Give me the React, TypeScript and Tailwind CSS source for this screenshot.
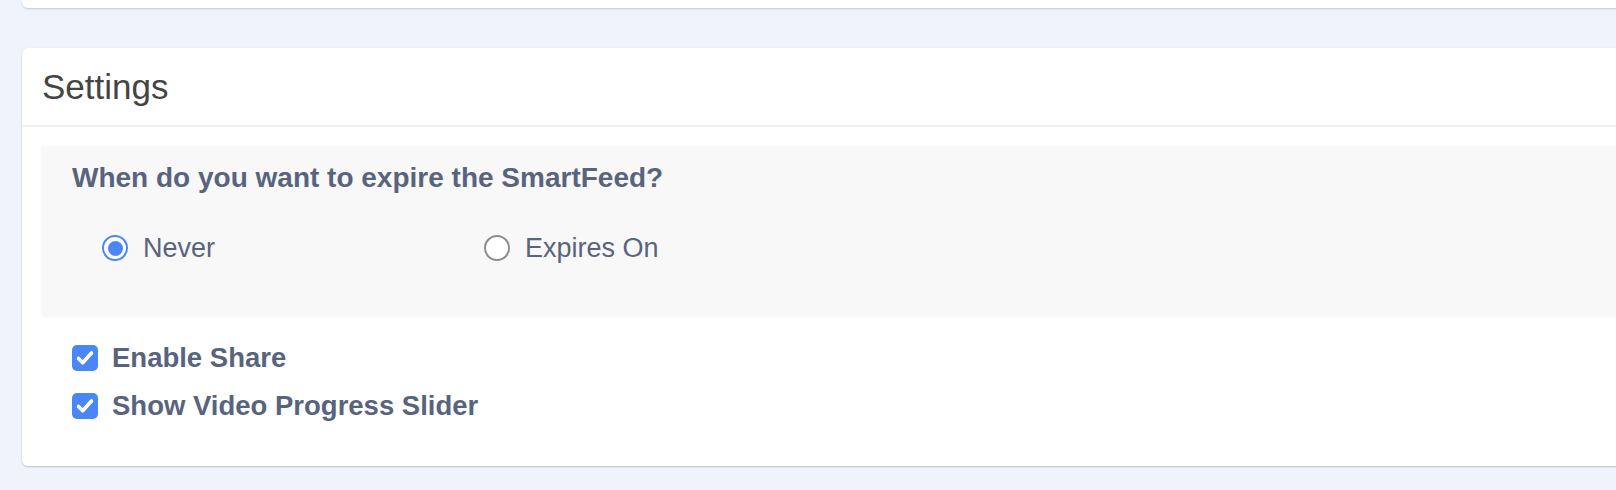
import React, { useState } from 'react'

const CheckRow: React.FC<{ label: string; checked: boolean; onToggle: () => void }> = ({ label, checked, onToggle }) => (
  <label className="flex h-[36px] items-center cursor-pointer" onClick={onToggle}>
    <span
      className={
        checked
          ? 'flex h-[26px] w-[26px] items-center justify-center rounded-[5px] bg-[#4a86f6]'
          : 'flex h-[26px] w-[26px] items-center justify-center rounded-[5px] border-2 border-[#8a8a8a] bg-white'
      }
    >
      {checked && (
        <svg width="22" height="22" viewBox="0 0 22 22" fill="none">
          <path d="M4.5 11.5l4.2 4.2L17.5 6" stroke="#fff" strokeWidth="3.6" strokeLinecap="round" strokeLinejoin="round" />
        </svg>
      )}
    </span>
    <span className="ml-[14px] text-[27.5px] font-bold text-[#58647e]">{label}</span>
  </label>
)

const Radio: React.FC<{ label: string; selected: boolean; onSelect: () => void; className?: string }> = ({
  label,
  selected,
  onSelect,
  className,
}) => (
  <label className={'flex h-[32px] items-center cursor-pointer ' + (className || '')} onClick={onSelect}>
    {selected ? (
      <span className="flex h-[26px] w-[26px] items-center justify-center rounded-full border-[2.5px] border-[#4a86f6] bg-white">
        <span className="h-[15px] w-[15px] rounded-full bg-[#4a86f6]" />
      </span>
    ) : (
      <span className="h-[26px] w-[26px] rounded-full border-2 border-[#8c8c8c] bg-white" />
    )}
    <span className="ml-[15px] text-[27px] text-[#58647e]">{label}</span>
  </label>
)

const App: React.FC = () => {
  const [expire, setExpire] = useState<'never' | 'on'>('never')
  const [share, setShare] = useState(true)
  const [slider, setSlider] = useState(true)

  return (
    <div className="h-[490px] w-full overflow-hidden bg-[#eff4fc] pl-[22px]" style={{ fontFamily: '"Liberation Sans", Arial, sans-serif' }}>
      {/* previous card, mostly scrolled out */}
      <div className="h-[8px] w-[1640px] rounded-b-md bg-white shadow-[0_1px_2px_rgba(0,0,0,0.18)]" />

      <div className="mt-[40px] w-[1640px] rounded-md bg-white shadow-[0_1px_2px_rgba(0,0,0,0.22)]">
        <div className="flex h-[79px] items-center border-b-2 border-[#f1f1f1] pl-[20px]">
          <h2 className="text-[35px] font-normal leading-none text-[#444444]">Settings</h2>
        </div>

        <div className="pl-[20px] pt-[20px] pb-[42px]">
          <div className="bg-[#f8f8f8] pl-[30px] pt-[15px] pb-[52px] shadow-[0_0_3px_rgba(0,0,0,0.06)]">
            <p className="text-[28px] font-bold leading-[32px] text-[#58647e]">When do you want to expire the SmartFeed?</p>
            <div className="mt-[38px] flex pl-[30px]">
              <Radio label="Never" selected={expire === 'never'} onSelect={() => setExpire('never')} className="w-[382px]" />
              <Radio label="Expires On" selected={expire === 'on'} onSelect={() => setExpire('on')} />
            </div>
          </div>

          <div className="mt-[24px] flex flex-col gap-[12px] pl-[30px]">
            <CheckRow label="Enable Share" checked={share} onToggle={() => setShare(!share)} />
            <CheckRow label="Show Video Progress Slider" checked={slider} onToggle={() => setSlider(!slider)} />
          </div>
        </div>
      </div>
    </div>
  )
}

export default App
